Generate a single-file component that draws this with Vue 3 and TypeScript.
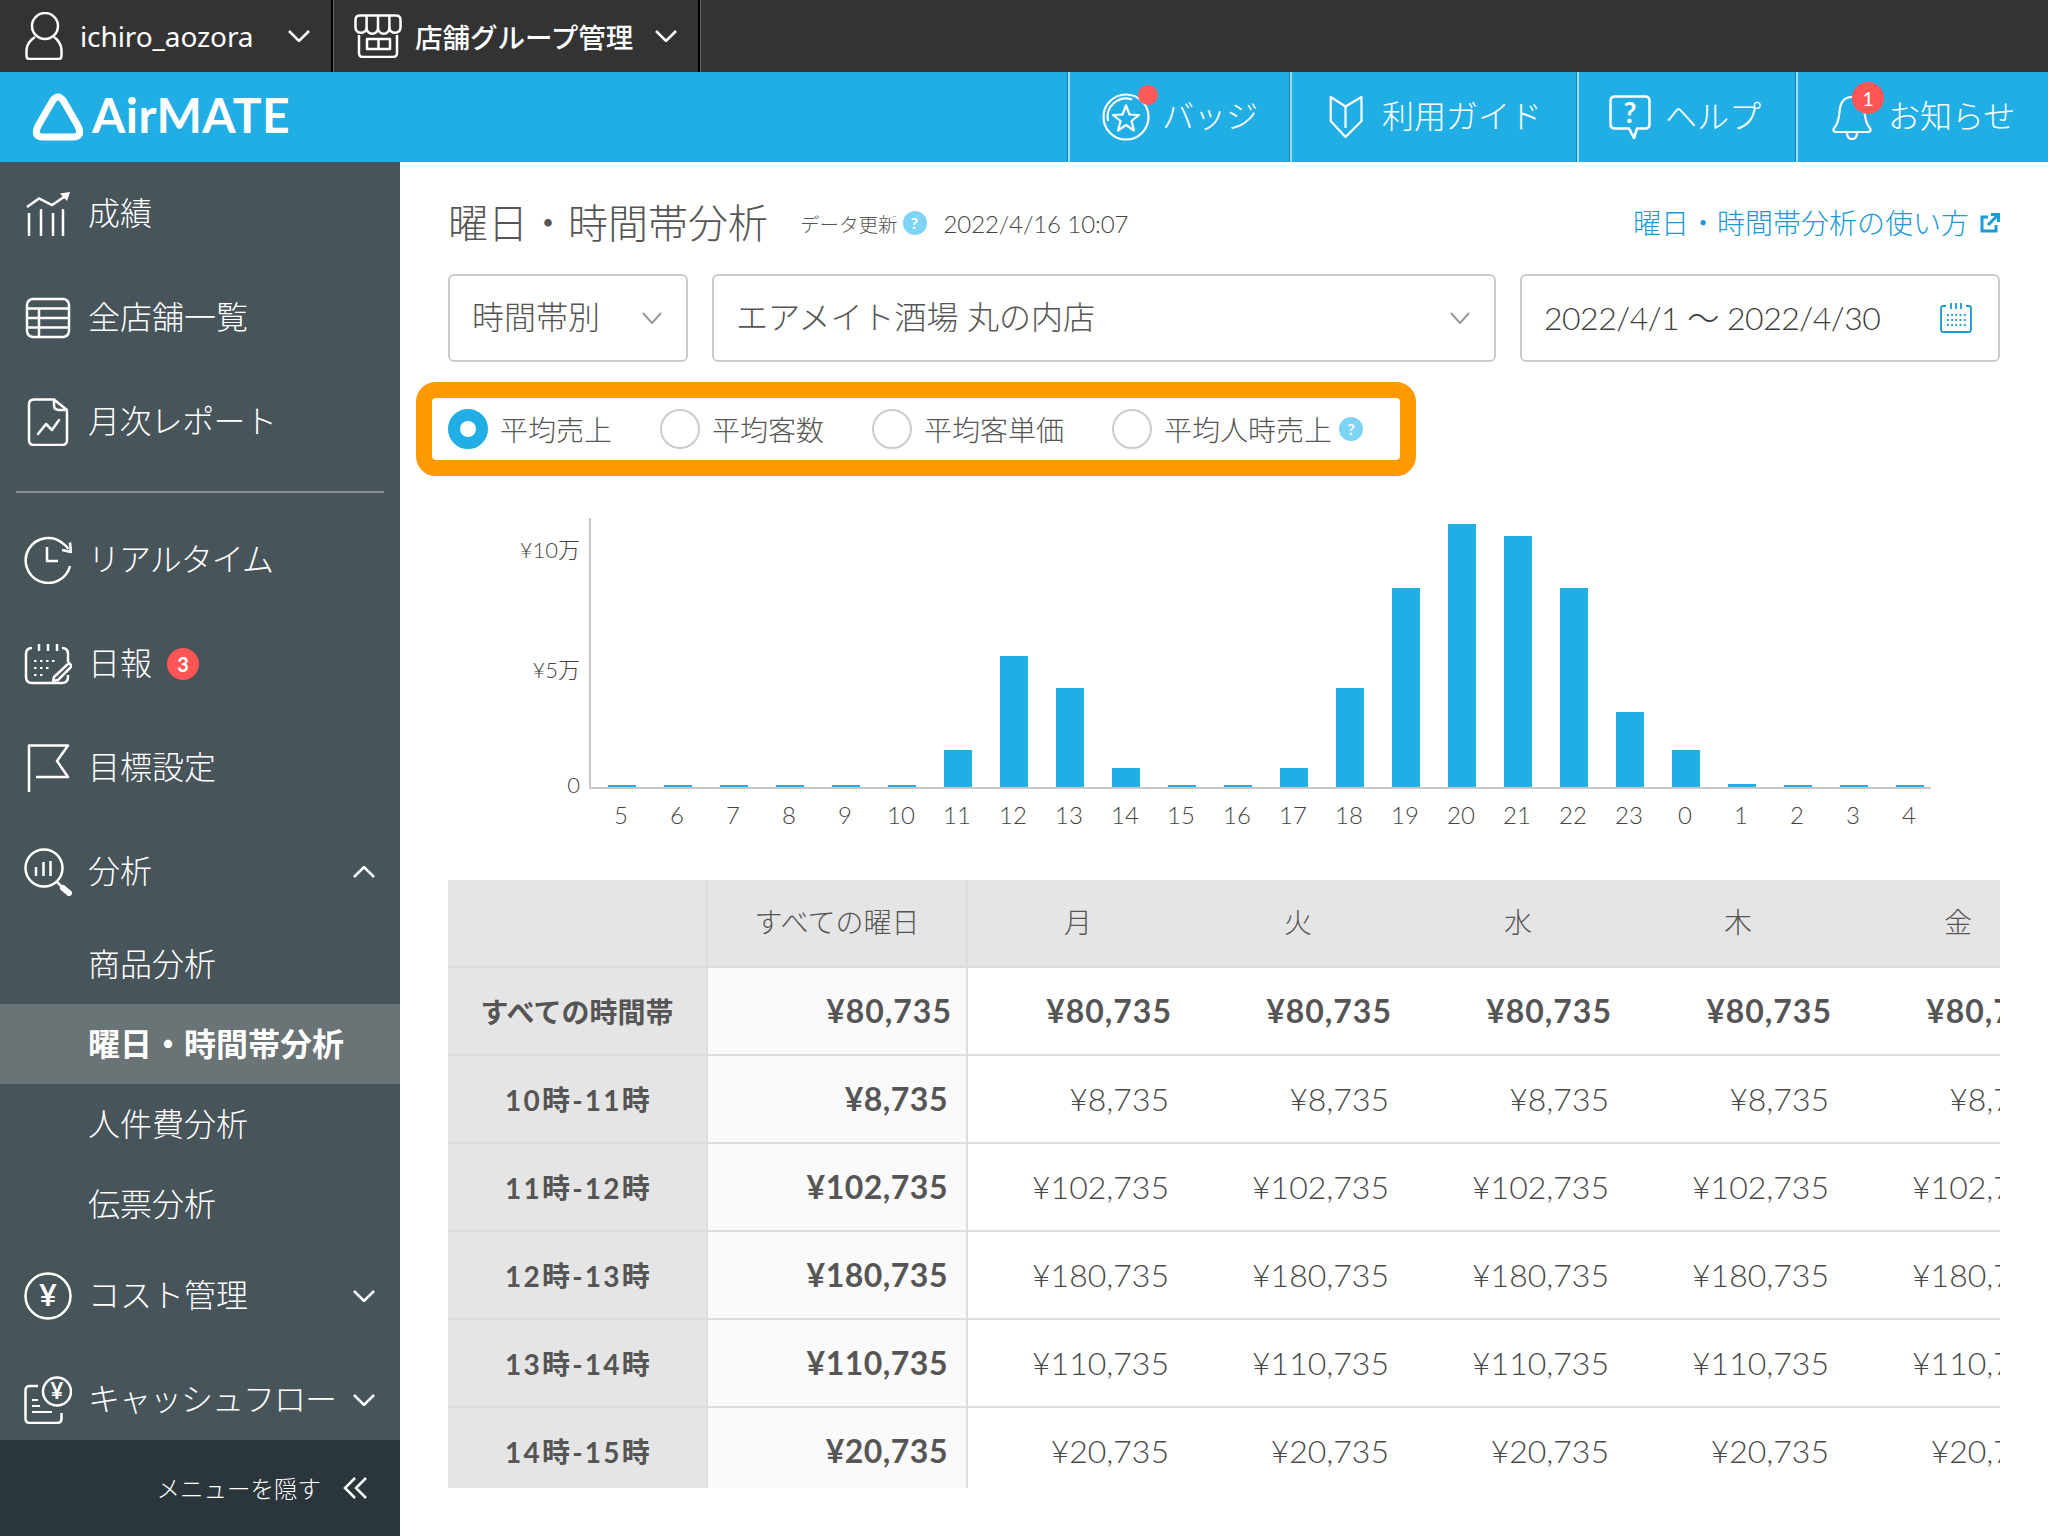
<script setup lang="ts">
interface Bar { label: string; h: number }
const heights: number[] = [2, 2, 2, 2, 2, 2, 37, 131, 99, 19, 2, 2, 19, 99, 199, 263, 251, 199, 75, 37, 3, 2, 2, 2]
const hourLabels: string[] = ['5', '6', '7', '8', '9', '10', '11', '12', '13', '14', '15', '16', '17', '18', '19', '20', '21', '22', '23', '0', '1', '2', '3', '4']
const bars: Bar[] = hourLabels.map((label, i) => ({ label, h: heights[i] }))
const baseY = 787
const barX = (i: number): number => 608 + i * 56

const days: string[] = ['月', '火', '水', '木', '金', '土', '日']
const rows: { label: string; value: string }[] = [
  { label: '10時-11時', value: '¥8,735' },
  { label: '11時-12時', value: '¥102,735' },
  { label: '12時-13時', value: '¥180,735' },
  { label: '13時-14時', value: '¥110,735' },
  { label: '14時-15時', value: '¥20,735' },
]
const radios: { label: string; on?: boolean; help?: boolean }[] = [
  { label: '平均売上', on: true },
  { label: '平均客数' },
  { label: '平均客単価' },
  { label: '平均人時売上', help: true },
]
</script>

<template>
  <div class="app">
    <header class="top">
      <div class="top-cell top-user">
        <svg class="ico-top" width="38" height="48" viewBox="0 0 38 48" fill="none" stroke="#fff" stroke-width="2.5">
          <circle cx="20" cy="14" r="13" />
          <path d="M10 25Q2 30 1.5 38V44Q1.5 47 4.5 47H33.5Q36.5 47 36.5 44V38Q36 30 29 25" />
        </svg>
        <span class="user-name">ichiro_aozora</span>
        <svg class="chev-top" width="22" height="12" viewBox="0 0 22 12" fill="none" stroke="#fff" stroke-width="2.5"><path d="M1 1l10 10L21 1" /></svg>
      </div>
      <div class="top-cell top-store">
        <svg width="48" height="44" viewBox="0 0 48 44" fill="none" stroke="#fff" stroke-width="2.5" stroke-linejoin="round">
          <path d="M1.5 6Q1.5 1.5 6 1.5H42Q46.5 1.5 46.5 6V14A5.6 5.6 0 0 1 35.4 14A5.7 5.7 0 0 1 24 14A5.7 5.7 0 0 1 12.6 14A5.6 5.6 0 0 1 1.5 14Z" />
          <path d="M12.6 1.5V14M24 1.5V14M35.4 1.5V14" />
          <path d="M5 21V39Q5 43 9 43H39Q43 43 43 39V21" />
          <path d="M13 25H36V35H13ZM24.500 25V35" />
        </svg>
        <span class="store-name">店舗グループ管理</span>
        <svg class="chev-top" width="22" height="12" viewBox="0 0 22 12" fill="none" stroke="#fff" stroke-width="2.5"><path d="M1 1l10 10L21 1" /></svg>
      </div>
    </header>

    <div class="brandbar">
      <div class="logo">
        <svg width="52" height="48" viewBox="0 0 52 48" fill="none" stroke="#fff" stroke-width="7" stroke-linejoin="round">
          <path d="M20.500 8Q26 0 31.500 8L46 33Q51 44 41 44H11Q1 44 6 33Z" />
        </svg>
        <span class="logo-text">AirMATE</span>
      </div>
      <nav class="utils">
        <div class="util util-badge">
          <span class="util-icon">
            <svg width="48" height="48" viewBox="0 0 48 48" fill="none" stroke="#fff" stroke-width="2.200" stroke-linejoin="round">
              <circle cx="24" cy="24" r="22.500" />
              <path d="M6 28A18.500 18.500 0 0 1 30 6.500" />
              <path d="M24 12.500L27.500 21.500L37 22L29.500 28L32 37.500L24 32L16 37.500L18.500 28L11 22L20.500 21.500Z" />
            </svg>
            <i class="dot"></i>
          </span>
          <span class="util-text">バッジ</span>
        </div>
        <div class="util util-guide">
          <svg width="34" height="42" viewBox="0 0 34 42" fill="none" stroke="#fff" stroke-width="2.200" stroke-linejoin="round">
            <path d="M1.700 1L16.500 10.500L32.500 1V25L16.500 41L1.700 25Z" />
            <path d="M16.500 10.500V32" />
          </svg>
          <span class="util-text">利用ガイド</span>
        </div>
        <div class="util util-help">
          <svg width="42" height="44" viewBox="0 0 42 44" fill="none" stroke="#fff" stroke-width="2.500" stroke-linejoin="round">
            <path d="M6 1.500H36Q40.500 1.500 40.500 6V29Q40.500 33.500 36 33.500H28L25 43L20 33.500H6Q1.500 33.500 1.500 29V6Q1.500 1.500 6 1.500Z" />
            <text x="21" y="27.500" class="help-q">?</text>
          </svg>
          <span class="util-text">ヘルプ</span>
        </div>
        <div class="util util-news">
          <span class="util-icon">
            <svg width="40" height="46" viewBox="0 0 40 46" fill="none" stroke="#fff" stroke-width="2.200" stroke-linejoin="round">
              <path d="M20 3C11 3 8 10 7.500 18C7 26 5 31 1.500 35Q1 38 4 38H36Q39 38 38.500 35C35 31 33 26 32.500 18C32 10 29 3 20 3Z" />
              <path d="M15 38Q15 45 20 45Q25 45 25 38" />
            </svg>
            <b class="news-count">1</b>
          </span>
          <span class="util-text">お知らせ</span>
        </div>
      </nav>
    </div>

    <div class="body">
      <aside class="side">
        <div class="side-scroll">
          <a class="item">
            <svg width="48" height="48" viewBox="0 0 48 48" fill="none" stroke="#fff" stroke-width="2.500">
              <path d="M3 17L15 8.500L28 15L40 7" />
              <path d="M36 3.500L46 2L43 11Z" fill="#fff" stroke="none" />
              <path d="M5 23V46M17 19V46M29 23V46M39 19V46" />
            </svg>
            <span>成績</span>
          </a>
          <a class="item">
            <svg width="48" height="48" viewBox="0 0 48 48" fill="none" stroke="#fff" stroke-width="2.500">
              <rect x="3" y="5" width="42" height="38" rx="6" />
              <path d="M3 14.500H45M3 24H45M3 33.500H45M15 14.500V43" />
            </svg>
            <span>全店舗一覧</span>
          </a>
          <a class="item">
            <svg width="48" height="48" viewBox="0 0 48 48" fill="none" stroke="#fff" stroke-width="2.500" stroke-linejoin="round" stroke-linecap="round">
              <path d="M30 1.500H10Q5 1.500 5 6.500V42Q5 47 10 47H38Q43 47 43 42V14" />
              <path d="M30 1.500L43 12H35Q30 12 30 7Z" />
              <path d="M14 36L22 26L28 32L35 22" />
            </svg>
            <span class="tight-s">月次レポート</span>
          </a>
          <hr class="rule" />
          <a class="item">
            <svg width="48" height="48" viewBox="0 0 48 48" fill="none" stroke="#fff" stroke-width="2.500" stroke-linejoin="round">
              <path d="M46 30A22.500 22.500 0 1 1 39 7.500Q42 9.500 44.500 13" />
              <path d="M46 6.500L47 16L38 14" />
              <path d="M23 11V25H34" />
            </svg>
            <span class="tight">リアルタイム</span>
          </a>
          <a class="item">
            <svg width="48" height="48" viewBox="0 0 48 48" fill="none" stroke="#fff" stroke-width="2.500" stroke-linejoin="round">
              <path d="M8 8Q2 8 2 14V37Q2 43 8 43H38Q44 43 44 37V35M38 8Q44 8 44 14V22" />
              <path d="M15 4V11M24 4V11M33 4V11" />
              <path d="M10 21H32M10 28H28M10 35H22" stroke-dasharray="2.500 3.500" stroke-width="2" />
              <path d="M30 37L45 23L48 26L34 40L29 41Z" fill="#47545a" />
            </svg>
            <span>日報</span>
            <b class="count">3</b>
          </a>
          <a class="item">
            <svg width="48" height="48" viewBox="0 0 48 48" fill="none" stroke="#fff" stroke-width="2.500" stroke-linejoin="round">
              <path d="M5 48V1.500H44L33 17L44 33H12" />
            </svg>
            <span>目標設定</span>
          </a>
          <a class="item">
            <svg width="48" height="48" viewBox="0 0 48 48" fill="none" stroke="#fff" stroke-width="2.500">
              <circle cx="20" cy="20" r="18.500" />
              <path d="M12 19V28M19.500 14V28M26.500 13V28" />
              <path d="M33 34L39 40" />
              <path d="M39 40L45 45" stroke-width="6" stroke-linecap="round" />
            </svg>
            <span>分析</span>
            <svg class="chev" width="22" height="12" viewBox="0 0 22 12" fill="none" stroke="#fff" stroke-width="2.500"><path d="M1 11L11 1l10 10" /></svg>
          </a>
          <a class="sub">商品分析</a>
          <a class="sub sub-on">曜日・時間帯分析</a>
          <a class="sub">人件費分析</a>
          <a class="sub">伝票分析</a>
          <a class="item">
            <svg width="48" height="48" viewBox="0 0 48 48" fill="none" stroke="#fff" stroke-width="2.500">
              <circle cx="24" cy="24" r="22.500" />
              <text x="24" y="34" class="yen-big">¥</text>
            </svg>
            <span>コスト管理</span>
            <svg class="chev" width="22" height="12" viewBox="0 0 22 12" fill="none" stroke="#fff" stroke-width="2.500"><path d="M1 1l10 10L21 1" /></svg>
          </a>
          <a class="item">
            <svg width="48" height="48" viewBox="0 0 48 48" fill="none" stroke="#fff" stroke-width="2.500" stroke-linejoin="round">
              <path d="M14 10H6Q1.500 10 1.500 14.500V42.500Q1.500 47 6 47H33Q37.500 47 37.500 42.500V37" />
              <circle cx="33" cy="15.500" r="14" />
              <text x="33" y="23" class="yen-small">¥</text>
              <path d="M8 24H14M8 30H16M8 36H28" stroke-width="2" />
            </svg>
            <span class="tight">キャッシュフロー</span>
            <svg class="chev" width="22" height="12" viewBox="0 0 22 12" fill="none" stroke="#fff" stroke-width="2.500"><path d="M1 1l10 10L21 1" /></svg>
          </a>
        </div>
        <footer class="side-foot">
          <span>メニューを隠す</span>
          <svg width="24" height="22" viewBox="0 0 24 22" fill="none" stroke="#fff" stroke-width="2.500"><path d="M12 1L2 11l10 10M23 1L13 11l10 10" /></svg>
        </footer>
      </aside>

      <main class="main">
        <div class="head">
          <h1 class="title">曜日・時間帯分析</h1>
          <span class="upd">データ更新</span>
          <i class="q">?</i>
          <span class="upd-date">2022/4/16 10:07</span>
          <a class="howto">
            <span>曜日・時間帯分析の使い方</span>
            <svg width="20" height="20" viewBox="0 0 20 20" fill="none" stroke="#1a9ad6" stroke-width="3">
              <path d="M8 4H2V18H16V12" />
              <path d="M8 12L18 2M11 1.500H18.500V9" />
            </svg>
          </a>
        </div>

        <div class="filters">
          <div class="sel sel-kind">
            <span class="sel-text">時間帯別</span>
            <svg width="20" height="12" viewBox="0 0 20 12" fill="none" stroke="#999" stroke-width="2"><path d="M1 1l9 10 9-10" /></svg>
          </div>
          <div class="sel sel-store">
            <span class="sel-text">エアメイト酒場 丸の内店</span>
            <svg width="20" height="12" viewBox="0 0 20 12" fill="none" stroke="#999" stroke-width="2"><path d="M1 1l9 10 9-10" /></svg>
          </div>
          <div class="sel sel-date">
            <span class="date-text">2022/4/1 〜 2022/4/30</span>
            <svg width="32" height="32" viewBox="0 0 32 32" fill="none" stroke="#1a9ad6" stroke-width="1.800">
              <path d="M6 4H3.500Q1 4 1 6.500V27.500Q1 30 3.500 30H28.500Q31 30 31 27.500V6.500Q31 4 28.500 4H26" />
              <path d="M11 1V7M16 1V7M21 1V7" />
              <path d="M7 13H26M7 18H26M7 23H26" stroke-dasharray="1.800 2.400" />
            </svg>
          </div>
        </div>

        <div class="radios">
          <label v-for="r in radios" :key="r.label" class="radio">
            <i class="circle" :class="{ on: r.on }"></i>
            <span>{{ r.label }}</span>
            <i v-if="r.help" class="q q-radio">?</i>
          </label>
        </div>

        <svg class="chart" width="1552" height="380" viewBox="448 500 1552 380">
          <text x="580" y="558" class="axis-y">¥10万</text>
          <text x="580" y="678" class="axis-y">¥5万</text>
          <text x="580" y="793" class="axis-y">0</text>
          <rect v-for="(b, i) in bars" :key="i" :x="barX(i)" :y="baseY - b.h" width="28" :height="b.h" fill="#21aee5" />
          <rect x="589" y="518" width="2" height="271" fill="#c8c8c8" />
          <rect x="589" y="787" width="1342" height="2" fill="#c8c8c8" />
          <text v-for="(b, i) in bars" :key="'l' + i" :x="barX(i) + 13" y="824" class="axis-x">{{ b.label }}</text>
        </svg>

        <div class="tbl-wrap">
          <table class="tbl">
            <thead>
              <tr>
                <th class="c-label"></th>
                <th class="c-all"><span class="th-text">すべての曜日</span></th>
                <th v-for="d in days" :key="d" class="c-day"><span class="th-text">{{ d }}</span></th>
              </tr>
            </thead>
            <tbody>
              <tr class="row-total">
                <th class="c-label">すべての時間帯</th>
                <td class="c-all">¥80,735</td>
                <td v-for="d in days" :key="d">¥80,735</td>
              </tr>
              <tr v-for="r in rows" :key="r.label">
                <th class="c-label hour">{{ r.label }}</th>
                <td class="c-all">{{ r.value }}</td>
                <td v-for="d in days" :key="d">{{ r.value }}</td>
              </tr>
            </tbody>
          </table>
        </div>
      </main>
    </div>
  </div>
</template>

<style>
html, body { margin: 0; background: #fff; }
</style>

<style scoped>
.app {
  width: 2048px;
  height: 1536px;
  overflow: hidden;
  display: flex;
  flex-direction: column;
  font-family: Lato, "Noto Sans CJK JP", sans-serif;
  color: #555;
}
.top {
  height: 72px;
  background: #333;
  display: flex;
  color: #fff;
  flex: none;
}
.top-cell {
  display: flex;
  align-items: center;
  box-sizing: border-box;
  border-right: 2px solid #000;
  box-shadow: 1px 0 0 #666;
}
.top-user { width: 333px; padding-left: 25px; }
.user-name {
  font-family: "Noto Sans", "Noto Sans CJK JP", sans-serif;
  font-size: 28px;
  margin-left: 17px;
  width: 208px;
  letter-spacing: -0.100px;
}
.top-store { width: 367px; padding-left: 21px; }
.store-name { font-family: "Noto Sans CJK JP", sans-serif; font-weight: 500; font-size: 27.500px; margin-left: 13px; width: 240px; white-space: nowrap; }
.chev-top { flex: none; }

.brandbar {
  height: 90px;
  background: #21aee5;
  display: flex;
  justify-content: space-between;
  flex: none;
  color: #fff;
}
.logo { display: flex; align-items: center; padding-left: 32px; }
.logo-text {
  font-family: Lato, sans-serif;
  font-size: 48px;
  font-weight: 700;
  margin: 0 0 5px 8px;
  letter-spacing: 0.500px;
}
.utils { display: flex; }
.util {
  display: flex;
  align-items: center;
  box-sizing: border-box;
  border-left: 2px solid #9cdcf5;
  box-shadow: -1px 0 0 #1d7fa6;
  font-family: "Noto Sans CJK JP", sans-serif;
  font-weight: 300;
  font-size: 32px;
  gap: 12px;
}
.util-text { margin-bottom: 6px; }
.util-icon { position: relative; display: flex; }
.util-badge { width: 222px; padding-left: 32px; }
.util-guide { width: 287px; padding-left: 37px; gap: 19px; }
.util-help { width: 219px; padding-left: 30px; gap: 14px; }
.util-news { width: 252px; padding-left: 34px; gap: 16px; }
.help-q { font-family: Lato, sans-serif; font-size: 28px; font-weight: 700; fill: #fff; stroke: none; text-anchor: middle; }
.dot {
  position: absolute;
  right: -8px;
  top: -8px;
  width: 20px;
  height: 20px;
  border-radius: 50%;
  background: #ff5a5a;
}
.news-count {
  position: absolute;
  left: 20px;
  top: -12px;
  width: 32px;
  height: 32px;
  border-radius: 50%;
  background: #f55;
  font-family: Lato, sans-serif;
  font-size: 20px;
  line-height: 32px;
  text-align: center;
  color: #fff;
}

.body { flex: 1; display: flex; min-height: 0; }
.side {
  width: 400px;
  flex: none;
  background: #47545a;
  display: flex;
  flex-direction: column;
  color: #fff;
  font-family: "Noto Sans CJK JP", sans-serif;
  font-weight: 300;
  font-size: 32px;
}
.side-scroll { flex: 1; overflow: hidden; min-height: 0; }
.item {
  height: 104px;
  display: flex;
  align-items: center;
  padding: 0 25px 0 24px;
  box-sizing: border-box;
}
.item > svg:first-child { flex: none; margin-right: 16px; }
.item > span { white-space: nowrap; margin-bottom: 6px; }
.tight { letter-spacing: -1px; }
.tight-s { letter-spacing: -0.600px; }
.chev { margin-left: auto; flex: none; }
.count {
  width: 32px;
  height: 32px;
  margin-left: 15px;
  border-radius: 50%;
  background: #f55;
  font-family: Lato, sans-serif;
  font-weight: 700;
  font-size: 20px;
  line-height: 32px;
  text-align: center;
}
.rule {
  margin: 17px 16px 15px;
  border: 0;
  height: 2px;
  background: #8e9194;
}
.sub {
  display: block;
  height: 80px;
  line-height: 76px;
  padding-left: 88px;
}
.sub-on { background: #6a7376; font-weight: 700; }
.yen-big { font-family: Lato, sans-serif; font-weight: 700; font-size: 30px; fill: #fff; stroke: none; text-anchor: middle; }
.yen-small { font-family: Lato, sans-serif; font-weight: 700; font-size: 22px; fill: #fff; stroke: none; text-anchor: middle; }
.side-foot {
  height: 96px;
  flex: none;
  background: #2b363c;
  display: flex;
  align-items: center;
  justify-content: flex-end;
  padding-right: 33px;
  gap: 22px;
  font-size: 23.500px;
}

.main { flex: 1; min-width: 0; padding: 28px 48px 0; box-sizing: border-box; }
.head { height: 66px; display: flex; align-items: center; }
.title { margin: 0; font-size: 40px; font-weight: 300; line-height: 1; color: #555; }
.upd { font-size: 19.500px; font-weight: 300; margin-left: 32px; }
.q {
  width: 24px;
  height: 24px;
  border-radius: 50%;
  background: #7ed4f5;
  color: #fff;
  font-style: normal;
  font-weight: 700;
  font-size: 16px;
  line-height: 24px;
  text-align: center;
  margin-left: 5px;
  flex: none;
}
.upd-date { font-size: 24px; font-weight: 300; margin-left: 17px; letter-spacing: -0.100px; color: #444; }
.howto {
  margin-left: auto;
  display: flex;
  align-items: center;
  gap: 11px;
  color: #1a9ad6;
  font-size: 28px;
  font-weight: 300;
}
.howto span { margin-bottom: 2px; }
.filters { display: flex; gap: 24px; margin-top: 18px; }
.sel {
  height: 88px;
  box-sizing: border-box;
  border: 2px solid #ccc;
  border-radius: 6px;
  display: flex;
  align-items: center;
  justify-content: space-between;
  padding: 0 24px 0 22px;
  font-size: 32px;
  font-weight: 300;
}
.sel-text { margin-bottom: 7px; }
.sel-kind { width: 240px; }
.sel-store { width: 784px; }
.sel-date { width: 480px; padding-right: 26px; }
.date-text { font-size: 32px; font-weight: 300; letter-spacing: -0.500px; margin-bottom: 4px; color: #3c3c3c; }
.radios {
  margin: 20px 0 0 -32px;
  width: 1000px;
  height: 94px;
  box-sizing: border-box;
  border: 16px solid #f90;
  border-radius: 20px;
  display: flex;
  align-items: center;
  padding-left: 16px;
  font-size: 28px;
  font-weight: 300;
}
.radio { display: flex; align-items: center; margin-right: 48px; white-space: nowrap; }
.circle {
  width: 40px;
  height: 40px;
  box-sizing: border-box;
  border: 2px solid #ccc;
  border-radius: 50%;
  margin-right: 12px;
  flex: none;
}
.circle.on { border: 12px solid #21aee5; }
.q-radio { margin-left: 7px; }
.chart { display: block; margin-top: 24px; }
.axis-y { font-size: 22px; font-weight: 300; fill: #444; text-anchor: end; }
.axis-x { font-size: 24px; font-weight: 300; fill: #444; text-anchor: middle; }
.tbl-wrap { width: 1552px; height: 608px; overflow: hidden; }
.tbl {
  border-collapse: separate;
  border-spacing: 0;
  table-layout: fixed;
  width: 2060px;
}
.tbl th, .tbl td {
  height: 88px;
  box-sizing: border-box;
  border-bottom: 2px solid #ddd;
  padding: 0;
}
.tbl thead th {
  background: #e5e5e5;
  font-size: 28px;
  font-weight: 300;
  text-align: center;
  white-space: nowrap;
}
.th-text { display: block; margin-bottom: 5px; }
.c-label, .c-all { width: 260px; }
.c-day { width: 220px; }
.tbl thead .c-label, .tbl thead .c-all { border-right: 2px solid #ddd; }
.tbl tbody .c-label {
  background: #e5e5e5;
  border-right: 2px solid #ddd;
  font-size: 28px;
  font-weight: 700;
  text-align: center;
}
.tbl tbody .hour { letter-spacing: 2.200px; padding-left: 3px; }
.tbl td {
  text-align: right;
  padding-right: 19px;
  padding-bottom: 2px;
  font-size: 32px;
  font-weight: 300;
  color: #484848;
}
.tbl td.c-all {
  background: #fafafa;
  border-right: 2px solid #ddd;
  font-weight: 700;
  letter-spacing: 0.500px;
  padding-right: 18px;
  color: #555;
}
.tbl .row-total td { font-weight: 700; padding-right: 16px; letter-spacing: 1px; color: #555; }
.tbl .row-total td.c-all { padding-right: 14px; letter-spacing: 1px; }
</style>
